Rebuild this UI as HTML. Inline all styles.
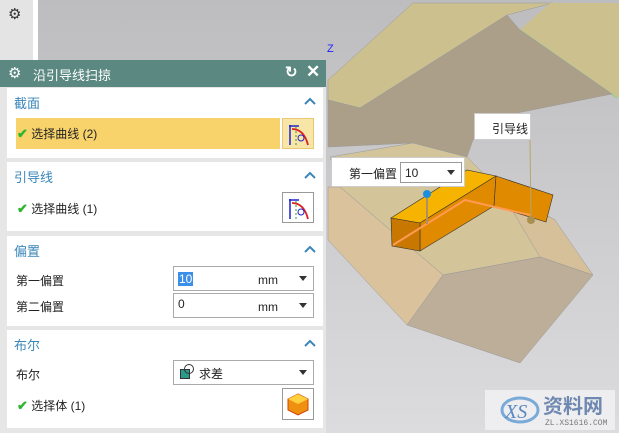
<!DOCTYPE html>
<html><head><meta charset="utf-8"><style>
*{margin:0;padding:0;box-sizing:border-box}
body{width:619px;height:433px;overflow:hidden;position:relative;background:#d6d6d8;font-family:"Liberation Sans","Noto Sans CJK SC",sans-serif;font-size:12px;color:#222}
.abs{position:absolute}
.sec{position:absolute;left:7px;width:316px;background:#fff}
.h{position:absolute;left:7px;color:#3a86b8;font-size:13px}
.car{position:absolute;right:7px;top:9px}
.lbl{position:absolute;font-size:12px}
.ck{color:#2db52d;font-weight:bold;font-size:13px}
.box{position:absolute;border:1px solid #aaa;background:#fff;height:25px}
.dd{position:absolute;right:6px;top:9px;width:0;height:0;border-left:4px solid transparent;border-right:4px solid transparent;border-top:5px solid #333}
</style></head><body>
<svg class="abs" style="left:0;top:0" width="619" height="433">
<defs><linearGradient id="bg" x1="0" y1="0" x2="0" y2="1"><stop offset="0" stop-color="#bdbdbf"/><stop offset="1" stop-color="#dcdcde"/></linearGradient></defs>
<rect x="38" y="0" width="581" height="433" fill="url(#bg)"/>
<polygon points="328,80 413,3 553,3 507,15 360,108 328,100" fill="#cbc08e" stroke="#999" stroke-width=".5"/>
<polygon points="520,30 550,3 619,3 619,97 617,98" fill="#cbc08e"/>
<line x1="520" y1="30" x2="617" y2="98" stroke="#8fd08f" stroke-width="1.2"/>
<polygon points="328,147 328,100 360,108 507,15 520,30 612,94 517,113 473,140 467,157 413,143" fill="#ab9f8a" stroke="#999" stroke-width=".5"/>
<polygon points="330,157 413,143 467,157 500,190 555,220 540,257 443,275 340,187" fill="#d3c49a" stroke="#999" stroke-width=".5"/>
<polygon points="328,187 340,187 443,275 407,325 328,240" fill="#dac29c" stroke="#999" stroke-width=".5"/>
<polygon points="500,190 555,220 593,275 540,257" fill="#d6c09a" stroke="#999" stroke-width=".5"/>
<polygon points="443,275 540,257 593,275 520,363 407,325" fill="#bcae98" stroke="#999" stroke-width=".5"/>
<polygon points="391,218 467,170 496,176 420,223" fill="#f6b400" stroke="#333" stroke-width=".6"/>
<polygon points="420,223 496,176 494,206 420,251" fill="#e08a00" stroke="#333" stroke-width=".6"/>
<polygon points="391,218 420,223 420,251 392,246" fill="#c87800" stroke="#333" stroke-width=".6"/>
<polygon points="496,176 553,195 546,222 494,206" fill="#e08a00" stroke="#333" stroke-width=".6"/>
<polyline points="393,245 465,200 495,207 530,215" stroke="#ff9a50" stroke-width="2" fill="none"/>
<line x1="530" y1="140" x2="531" y2="218" stroke="#b8a56a"/>
<line x1="427" y1="195" x2="427" y2="224" stroke="#b09060" stroke-width="2"/>
<circle cx="427" cy="194" r="4" fill="#1a8ee0"/>
<circle cx="531" cy="220" r="4" fill="#a89050"/>
<text x="327" y="52" fill="#22f" font-size="11">Z</text>
<rect x="485" y="390" width="130" height="40" fill="#eeeef0"/>
<ellipse cx="520" cy="410" rx="18" ry="12" fill="none" stroke="#7aaad8" stroke-width="3"/>
<text x="505" y="418" fill="#5a88c0" font-size="20" font-style="italic" font-family="Liberation Serif">XS</text>
<text x="543" y="413" fill="#6f88b0" font-size="20" font-weight="bold" font-family="Noto Sans CJK SC">资料网</text>
<text x="545" y="425" fill="#777" font-size="8" font-family="Liberation Mono">ZL.XS1616.COM</text>
</svg>
<div class="abs" style="left:0;top:0;width:33px;height:60px;background:#e4e4e4"></div>
<div class="abs" style="left:33px;top:0;width:5px;height:60px;background:#fff"></div>
<div class="abs" style="left:8px;top:5px;font-size:15px;color:#333">⚙</div>
<div class="abs" style="left:0;top:60px;width:326px;height:373px;background:#e6e6e6"></div>
<div class="abs" style="left:0;top:60px;width:326px;height:27px;background:#5b8982;color:#fff">
<span class="abs" style="left:8px;top:4px;font-size:15px">⚙</span>
<span class="abs" style="left:33px;top:5px;font-size:13px">沿引导线扫掠</span>
<span class="abs" style="left:285px;top:3px;font-size:15px;font-weight:bold">↻</span>
<span class="abs" style="left:306px;top:2px;font-size:17px;font-weight:bold">✕</span></div>
<div class="sec" style="top:88px;height:70px"><span class="h" style="top:5px">截面</span><svg class="car" width="12" height="8"><path d="M1 7L6 2L11 7" stroke="#3a86b8" stroke-width="2" fill="none"/></svg>
<div class="abs" style="left:9px;top:30px;width:264px;height:31px;background:#f8d36c"></div>
<span class="lbl" style="left:10px;top:37px"><span class="ck">✔</span> 选择曲线 (2)</span>
<div class="abs" style="left:275px;top:30px;width:32px;height:31px;background:#f8e6a8;border:1px solid #e8c870"></div>
<svg class="abs" style="left:279px;top:33px" width="26" height="26"><path d="M4 4v20M3 5h10" stroke="#22c" stroke-width="1.5" fill="none"/><path d="M6 8q12 0 16 16" stroke="#d22" stroke-width="1.8" fill="none"/><circle cx="15" cy="17" r="3" stroke="#22c" fill="none"/><line x1="10" y1="6" x2="10" y2="24" stroke="#393" stroke-dasharray="2 2"/></svg></div>
<div class="sec" style="top:162px;height:69px"><span class="h" style="top:5px">引导线</span><svg class="car" width="12" height="8"><path d="M1 7L6 2L11 7" stroke="#3a86b8" stroke-width="2" fill="none"/></svg>
<span class="lbl" style="left:10px;top:38px"><span class="ck">✔</span> 选择曲线 (1)</span>
<div class="abs" style="left:275px;top:30px;width:32px;height:31px;border:1px solid #999;background:#fff"></div>
<svg class="abs" style="left:279px;top:33px" width="26" height="26"><path d="M4 4v20M3 5h10" stroke="#22c" stroke-width="1.5" fill="none"/><path d="M6 8q12 0 16 16" stroke="#d22" stroke-width="1.8" fill="none"/><circle cx="15" cy="17" r="3" stroke="#22c" fill="none"/><line x1="10" y1="6" x2="10" y2="24" stroke="#393" stroke-dasharray="2 2"/></svg></div>
<div class="sec" style="top:236px;height:90px"><span class="h" style="top:5px">偏置</span><svg class="car" width="12" height="8"><path d="M1 7L6 2L11 7" stroke="#3a86b8" stroke-width="2" fill="none"/></svg>
<span class="lbl" style="left:9px;top:36px">第一偏置</span>
<div class="box" style="left:166px;top:30px;width:141px"><span class="abs" style="left:4px;top:5px;background:#3b8fe8;color:#fff;padding:0 1px">10</span><span class="abs" style="left:84px;top:6px">mm</span><div class="dd"></div></div>
<span class="lbl" style="left:9px;top:62px">第二偏置</span>
<div class="box" style="left:166px;top:57px;width:141px"><span class="abs" style="left:4px;top:3px">0</span><span class="abs" style="left:84px;top:6px">mm</span><div class="dd"></div></div></div>
<div class="sec" style="top:330px;height:98px"><span class="h" style="top:5px">布尔</span><svg class="car" width="12" height="8"><path d="M1 7L6 2L11 7" stroke="#3a86b8" stroke-width="2" fill="none"/></svg>
<span class="lbl" style="left:9px;top:36px">布尔</span>
<div class="box" style="left:166px;top:30px;width:141px"><span class="abs" style="left:6px;top:8px;width:10px;height:10px;background:#2a9a8a;border:1px solid #333"></span><span class="abs" style="left:10px;top:3px;width:10px;height:10px;border:1.5px solid #333;border-radius:50%"></span><span class="abs" style="left:25px;top:4px">求差</span><div class="dd"></div></div>
<span class="lbl" style="left:10px;top:67px"><span class="ck">✔</span> 选择体 (1)</span>
<div class="abs" style="left:275px;top:58px;width:32px;height:32px;border:1px solid #999;background:#fff"></div>
<svg class="abs" style="left:279px;top:62px" width="24" height="24"><polygon points="12,2 22,7 22,18 12,23 2,18 2,7" fill="#f09010" stroke="#d04000"/><polygon points="12,2 22,7 12,12 2,7" fill="#ffd040"/></svg></div>
<div class="abs" style="left:331px;top:157px;width:134px;height:30px;background:#fff;border:1px solid #ccc"><span class="abs" style="left:17px;top:7px">第一偏置</span><div class="abs" style="left:68px;top:4px;width:62px;height:21px;border:1px solid #999"><span class="abs" style="left:4px;top:3px">10</span><div class="dd" style="top:7px"></div></div></div>
<div class="abs" style="left:474px;top:113px;width:57px;height:27px;background:#fff;border:1px solid #ccc"><span class="abs" style="left:17px;top:6px">引导线</span></div>
</body></html>
